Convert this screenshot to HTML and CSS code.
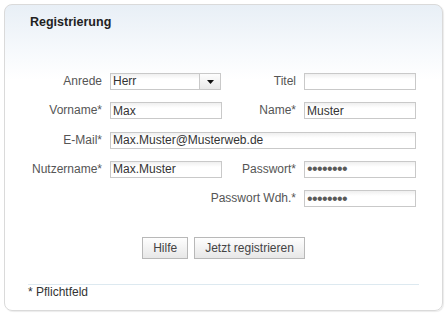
FILE: index.html
```html
<!DOCTYPE html>
<html lang="de">
<head>
<meta charset="utf-8">
<title>Registrierung</title>
<link rel="stylesheet" href="styles.css">
</head>
<body>
<div class="panel">
  <h2 class="title">Registrierung</h2>
  <form class="form-grid">
    <label class="lbl">Anrede</label>
    <div class="select">
      <span class="select-val">Herr</span>
      <span class="select-btn"><svg width="7" height="4" viewBox="0 0 7 4"><path d="M0 0H7L3.5 4Z" fill="#111"/></svg></span>
    </div>
    <label class="lbl">Titel</label>
    <input class="field" type="text" value="">

    <label class="lbl">Vorname*</label>
    <input class="field" type="text" value="Max">
    <label class="lbl">Name*</label>
    <input class="field" type="text" value="Muster">

    <label class="lbl">E-Mail*</label>
    <input class="field wide" type="text" value="Max.Muster@Musterweb.de">

    <label class="lbl">Nutzername*</label>
    <input class="field" type="text" value="Max.Muster">
    <label class="lbl">Passwort*</label>
    <input class="field pw" type="password" value="12345678">

    <span class="spacer"></span>
    <label class="lbl">Passwort Wdh.*</label>
    <input class="field pw" type="password" value="12345678">
  </form>
  <div class="actions">
    <button class="btn" type="button">Hilfe</button>
    <button class="btn" type="button">Jetzt registrieren</button>
  </div>
  <div class="footer">* Pflichtfeld</div>
</div>
</body>
</html>
```
FILE: styles.css
```css
html, body {
  margin: 0;
  padding: 0;
  background: #fff;
}
body {
  font-family: "Liberation Sans", Arial, sans-serif;
  font-size: 12px;
  color: #555;
}
.panel {
  margin: 4px;
  width: 391px;
  padding: 9px 23px 10px 23px;
  border: 1px solid #dadada;
  border-radius: 8px;
  background: linear-gradient(#e8eff6 0px, #f6f9fc 45px, #fff 75px);
  box-shadow: 1px 1px 1px rgba(0,0,0,0.08);
}
.title {
  margin: 0;
  padding-left: 2px;
  font-size: 12.5px;
  line-height: 16px;
  font-weight: bold;
  color: #222;
}
.form-grid {
  margin: 43px 0 0 0;
  display: grid;
  grid-template-columns: 74px 112px 66px 112px;
  grid-auto-rows: 17px;
  column-gap: 8px;
  row-gap: 12.25px;
  align-items: center;
}
.spacer {
  grid-column: 1 / 3;
}
.lbl {
  justify-self: end;
  text-align: right;
  white-space: nowrap;
  line-height: 17px;
  color: #555;
}
.field {
  box-sizing: border-box;
  height: 17px;
  width: 100%;
  margin: 0;
  padding: 0 2px;
  border: 1px solid #c9c9c9;
  border-radius: 0;
  background: linear-gradient(#efefef, #fff 5px);
  font-family: "Liberation Sans", Arial, sans-serif;
  font-size: 12px;
  color: #333;
  outline: none;
}
.field.wide {
  grid-column: 2 / 5;
}
.field.pw {
  font-size: 16px;
  letter-spacing: -0.6px;
  color: #5a5a5a;
}
.select {
  box-sizing: border-box;
  height: 17px;
  width: 111px;
  display: flex;
  border: 1px solid #c9c9c9;
  background: linear-gradient(#efefef, #fff 5px);
}
.select-val {
  flex: 1;
  padding-left: 2px;
  line-height: 15px;
  color: #333;
}
.select-btn {
  width: 20px;
  border-left: 1px solid #c9c9c9;
  background: linear-gradient(#fdfdfd, #e9e9e9);
  display: flex;
  align-items: center;
  justify-content: center;
}
.actions {
  margin-top: 30px;
  display: flex;
  justify-content: center;
  gap: 6px;
}
.btn {
  box-sizing: border-box;
  height: 22px;
  margin: 0;
  padding: 0 10px;
  border: 1px solid #b8b8b8;
  border-radius: 0;
  background: linear-gradient(#fefefe, #e7e7e7);
  font-family: "Liberation Sans", Arial, sans-serif;
  font-size: 12px;
  color: #444;
}
.footer {
  margin-top: 25px;
  border-top: 1px solid #dde9f0;
  line-height: 15px;
  color: #333;
}
```
